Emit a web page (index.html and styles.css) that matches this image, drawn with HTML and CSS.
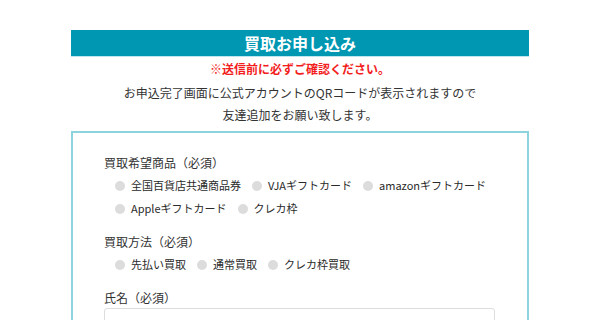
FILE: index.html
```html
<!DOCTYPE html>
<html lang="ja">
<head>
<meta charset="utf-8">
<link rel="stylesheet" href="styles.css">
</head>
<body>
<div class="wrap">
  <h1 class="title">買取お申し込み</h1>
  <p class="warn">※送信前に必ずご確認ください。</p>
  <p class="notice">お申込完了画面に公式アカウントのQRコードが表示されますので<br>友達追加をお願い致します。</p>
  <form class="box">
    <div class="field">
      <div class="label">買取希望商品（必須）</div>
      <div class="radios">
        <span class="opt"><span class="dot"></span>全国百貨店共通商品券</span>
        <span class="opt"><span class="dot"></span>VJAギフトカード</span>
        <span class="opt"><span class="dot"></span>amazonギフトカード</span>
        <span class="opt"><span class="dot"></span>Appleギフトカード</span>
        <span class="opt"><span class="dot"></span>クレカ枠</span>
      </div>
    </div>
    <div class="field">
      <div class="label">買取方法（必須）</div>
      <div class="radios">
        <span class="opt"><span class="dot"></span>先払い買取</span>
        <span class="opt"><span class="dot"></span>通常買取</span>
        <span class="opt"><span class="dot"></span>クレカ枠買取</span>
      </div>
    </div>
    <div class="field">
      <div class="label">氏名（必須）</div>
      <div class="input"></div>
    </div>
  </form>
</div>
</body>
</html>
```
FILE: styles.css
```css
html, body {
  margin: 0;
  padding: 0;
  background: #fff;
}
body {
  font-family: "Noto Sans CJK JP", "Noto Sans", sans-serif;
  color: #333;
  font-size: 12px;
}
.wrap {
  width: 458px;
  margin: 0 auto;
  padding-top: 30px;
}
.title {
  margin: 0;
  height: 26px;
  line-height: 26px;
  background: #0097b2;
  color: #fff;
  text-align: center;
  font-size: 16px;
  font-weight: 700;
  box-shadow: 0 1px 0 #bfe6ee;
}
.warn {
  margin: 0;
  line-height: 26px;
  text-align: center;
  color: #f21d1d;
  font-weight: 700;
  font-size: 12px;
}
.notice {
  margin: 0;
  line-height: 22px;
  text-align: center;
  font-size: 12px;
  color: #333;
}
.box {
  margin: 5px 0 0;
  border: 2px solid #8dd3de;
  border-bottom: none;
  padding: 18px 32px 20px 31px;
  height: 200px;
}
.field {
  margin-bottom: 10px;
}
.label {
  line-height: 23px;
  font-size: 12px;
}
.radios {
  display: flex;
  flex-wrap: wrap;
  column-gap: 11px;
  padding-left: 11px;
}
.opt {
  display: flex;
  align-items: center;
  line-height: 23px;
  font-size: 11px;
  color: #2a2a2a;
}
.dot {
  width: 10px;
  height: 10px;
  border-radius: 50%;
  background: #dcdcdc;
  margin-right: 6px;
}
.input {
  height: 30px;
  border: 1px solid #ddd;
  border-radius: 3px;
  margin-top: -1px;
}
```
